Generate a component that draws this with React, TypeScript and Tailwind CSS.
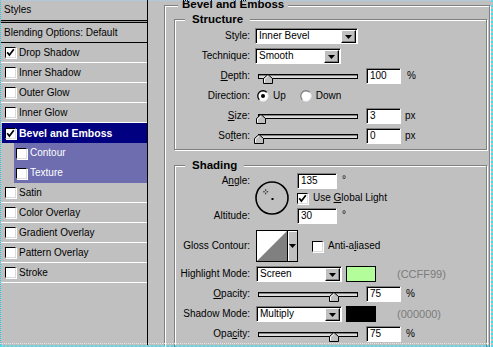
import React from "react";

const F = "font-['Liberation_Sans',Arial,sans-serif]";

function Check({ on }: { on?: boolean }) {
  return (
    <span className="w-[11px] h-[11px] shrink-0 bg-white border border-t-black border-l-black border-b-[#dcdcdc] border-r-[#dcdcdc] shadow-[1px_1px_0_#fff] flex items-center justify-center">
      {on && (
        <svg width="9" height="9" viewBox="0 0 9 9">
          <path d="M1.2 4.2 L3.4 7 L7.8 1.2" stroke="#000" strokeWidth="1.7" fill="none" />
        </svg>
      )}
    </span>
  );
}

function Arrow() {
  return (
    <svg width="7" height="4" viewBox="0 0 7 4">
      <path d="M0 0H7L3.5 4Z" fill="#000" />
    </svg>
  );
}

function Select({ value, wide }: { value: string; wide?: boolean }) {
  return (
    <div
      className={`${wide ? "w-[103px]" : "w-[86px]"} h-[16px] flex bg-white border border-t-[#808080] border-l-[#808080] border-b-white border-r-white shadow-[inset_1px_1px_0_#000]`}
    >
      <span className="flex-1 pl-[3px] leading-[14px]">{value}</span>
      <span className="w-[15px] h-[13px] mt-[1px] mr-[1px] bg-[#c0c0c0] border border-t-white border-l-white border-b-black border-r-black shadow-[inset_-1px_-1px_0_#808080] flex items-center justify-center">
        <Arrow />
      </span>
    </div>
  );
}

function Field({ v, wide }: { v: string; wide?: boolean }) {
  return (
    <div
      className={`${wide ? "w-[40px]" : "w-[35px]"} h-[16px] shrink-0 bg-white border border-t-[#808080] border-l-[#808080] border-b-white border-r-white shadow-[inset_1px_1px_0_#000] pl-[3px] leading-[14px]`}
    >
      {v}
    </div>
  );
}

function Slider({ pos }: { pos: number }) {
  return (
    <div className="relative w-[103px] h-[20px] pt-[8px] shrink-0">
      <div className="ml-[3px] h-[5px] border border-black bg-[#dadada] shadow-[inset_0_1px_0_#808080]" />
      <svg
        className="absolute top-[8px]"
        style={{ left: pos - 5 }}
        width="10"
        height="10"
        viewBox="0 0 10 10"
      >
        <path d="M0.5 9.5V4.5L5 0.5L9.5 4.5V9.5Z" fill="#c0c0c0" stroke="#000" />
        <path d="M1.5 8.5V5L5 1.9" stroke="#fff" fill="none" />
      </svg>
    </div>
  );
}

function Radio({ on }: { on?: boolean }) {
  return (
    <svg width="12" height="12" viewBox="0 0 12 12" className="shrink-0">
      <circle cx="6" cy="6" r="5.2" fill="#fff" stroke="#e8e8e8" />
      <path d="M2.3 9.7 A5.2 5.2 0 0 1 9.7 2.3" stroke={on ? "#000" : "#808080"} strokeWidth="1.3" fill="none" />
      {on && <circle cx="6" cy="6" r="2" fill="#000" />}
    </svg>
  );
}

function StyleRow({ label, on, kind }: { label: string; on?: boolean; kind?: "sel" | "sub" }) {
  if (kind === "sel")
    return (
      <div className="h-[20px] flex items-center bg-[#000080] ml-[2px] pl-[3px] text-white font-bold text-[10.5px]">
        <Check on={on} />
        <span className="ml-[3px]">{label}</span>
      </div>
    );
  if (kind === "sub")
    return (
      <div className="h-[20px] flex pl-[14px]">
        <div className="flex-1 flex items-center bg-[#6d6daf] pl-[2px] text-white">
          <Check />
          <span className="ml-[3px]">{label}</span>
        </div>
      </div>
    );
  return (
    <div className="h-[20px] flex items-center border-b border-white pl-[5px]">
      <Check on={on} />
      <span className="ml-[3px]">{label}</span>
    </div>
  );
}

const groove =
  "border border-[#808080] shadow-[inset_1px_1px_0_#fff,1px_1px_0_#fff]";

function Label({ children }: { children: React.ReactNode }) {
  return <span className="w-[75px] shrink-0 text-right">{children}</span>;
}

export default function App() {
  return (
    <div className={`relative w-[493px] h-[347px] overflow-hidden bg-[#c0c0c0] text-black text-[10px] leading-none ${F} flex`}>
      {/* styles list */}
      <div className="w-[148px] shrink-0 h-full border-r border-black">
        <div className="h-[20px] flex items-center pl-[4px]">Styles</div>
        <div className="h-[3px] border-y border-black bg-[#9a9a9a]" />
        <div className="h-[20px] flex items-center pl-[4px] border-b border-black">
          Blending Options: Default
        </div>
        <StyleRow label="Drop Shadow" on />
        <StyleRow label="Inner Shadow" />
        <StyleRow label="Outer Glow" />
        <StyleRow label="Inner Glow" />
        <StyleRow label="Bevel and Emboss" on kind="sel" />
        <StyleRow label="Contour" kind="sub" />
        <StyleRow label="Texture" kind="sub" />
        <StyleRow label="Satin" />
        <StyleRow label="Color Overlay" />
        <StyleRow label="Gradient Overlay" />
        <StyleRow label="Pattern Overlay" />
        <StyleRow label="Stroke" />
      </div>

      {/* options */}
      <div className="flex-1">
        <div className={`relative ml-[16px] mt-[5px] w-[326px] h-[360px] ${groove} pl-[9px] pt-[13px]`}>
          <span className="absolute -top-[8px] left-[13px] px-[4px] bg-[#c0c0c0] font-bold text-[11.5px] leading-[12px]">
            Bevel and Emboss
          </span>

          {/* Structure */}
          <div className={`relative w-[313px] h-[131px] ${groove} pt-[6px]`}>
            <span className="absolute -top-[7px] left-[10px] px-[7px] bg-[#c0c0c0] font-bold text-[11.5px] leading-[12px]">
              Structure
            </span>
            <div className="h-[20px] flex items-center">
              <Label>Style:</Label>
              <div className="ml-[5px]">
                <Select value="Inner Bevel" wide />
              </div>
            </div>
            <div className="h-[20px] flex items-center">
              <Label>Technique:</Label>
              <div className="ml-[5px]">
                <Select value="Smooth" />
              </div>
            </div>
            <div className="h-[20px] flex items-center">
              <Label>
                <u className="underline-offset-[1px]">D</u>epth:
              </Label>
              <div className="ml-[5px]">
                <Slider pos={13} />
              </div>
              <div className="ml-[8px]">
                <Field v="100" />
              </div>
              <span className="ml-[6px]">%</span>
            </div>
            <div className="h-[20px] flex items-center">
              <Label>Direction:</Label>
              <div className="ml-[7px] flex items-center">
                <Radio on />
                <span className="ml-[4px]">Up</span>
              </div>
              <div className="ml-[14px] flex items-center">
                <Radio />
                <span className="ml-[4px]">Down</span>
              </div>
            </div>
            <div className="h-[20px] flex items-center">
              <Label>
                <u className="underline-offset-[1px]">S</u>ize:
              </Label>
              <div className="ml-[5px]">
                <Slider pos={6} />
              </div>
              <div className="ml-[8px]">
                <Field v="3" />
              </div>
              <span className="ml-[4px]">px</span>
            </div>
            <div className="h-[20px] flex items-center">
              <Label>
                So<u className="underline-offset-[1px]">f</u>ten:
              </Label>
              <div className="ml-[5px]">
                <Slider pos={4} />
              </div>
              <div className="ml-[8px]">
                <Field v="0" />
              </div>
              <span className="ml-[4px]">px</span>
            </div>
          </div>

          {/* Shading */}
          <div className={`relative mt-[15px] w-[313px] h-[200px] ${groove} pt-[7px]`}>
            <span className="absolute -top-[7px] left-[10px] px-[7px] bg-[#c0c0c0] font-bold text-[11.5px] leading-[12px]">
              Shading
            </span>
            <div className="h-[51px] flex">
              <div className="w-[75px] shrink-0 flex flex-col justify-between text-right">
                <span className="leading-[16px]">
                  A<u className="underline-offset-[1px]">n</u>gle:
                </span>
                <span className="leading-[16px]">Altitude:</span>
              </div>
              <svg className="ml-[4px] mt-[7px] shrink-0" width="36" height="36" viewBox="0 0 36 36">
                <circle cx="18" cy="18" r="16" fill="none" stroke="#000" strokeWidth="1.6" />
                <path d="M11.7 9.3v1.6M11.7 12.7v1.6M9.2 11.8h1.6M12.6 11.8h1.6" stroke="#000" strokeWidth="0.9" />
                <rect x="17.5" y="18" width="2" height="2" fill="#000" />
              </svg>
              <div className="ml-[7px] flex flex-col">
                <div className="flex">
                  <Field v="135" wide />
                  <span className="ml-[5px] mt-[2px]">°</span>
                </div>
                <div className="mt-[3px] h-[12px] flex items-center">
                  <Check on />
                  <span className="ml-[5px]">
                    Use <u className="underline-offset-[1px]">G</u>lobal Light
                  </span>
                </div>
                <div className="mt-[4px] flex">
                  <Field v="30" wide />
                  <span className="ml-[5px] mt-[2px]">°</span>
                </div>
              </div>
            </div>

            <div className="mt-[6px] h-[32px] flex items-center">
              <Label>Gloss Contour:</Label>
              <div className="ml-[6px] w-[42px] h-[32px] flex border border-black shrink-0">
                <svg width="30" height="30" viewBox="0 0 30 30" className="block shrink-0">
                  <rect width="30" height="30" fill="#fff" />
                  <path d="M0 30L30 0V30Z" fill="#808080" />
                </svg>
                <div className="flex-1 bg-[#c0c0c0] border-l border-black flex items-center justify-center shadow-[inset_1px_1px_0_#fff]">
                  <Arrow />
                </div>
              </div>
              <div className="ml-[14px]">
                <Check />
              </div>
              <span className="ml-[5px]">
                Anti-a<u className="underline-offset-[1px]">l</u>iased
              </span>
            </div>

            <div className="mt-[2px] h-[20px] flex items-center">
              <Label>Highlight Mode:</Label>
              <div className="ml-[6px] w-[85px]">
                <Select value="Screen" />
              </div>
              <div className="ml-[5px] w-[30px] h-[16px] bg-[#b3fd9b] border border-black" />
              <span className="ml-[21px] text-[11px] text-[#7b7b7b]">(CCFF99)</span>
            </div>
            <div className="h-[20px] flex items-center">
              <Label>
                <u className="underline-offset-[1px]">O</u>pacity:
              </Label>
              <div className="ml-[5px]">
                <Slider pos={79} />
              </div>
              <div className="ml-[8px]">
                <Field v="75" />
              </div>
              <span className="ml-[5px]">%</span>
            </div>
            <div className="h-[20px] flex items-center">
              <Label>Shadow Mode:</Label>
              <div className="ml-[6px] w-[85px]">
                <Select value="Multiply" />
              </div>
              <div className="ml-[5px] w-[30px] h-[16px] bg-black border border-black" />
              <span className="ml-[21px] text-[11px] text-[#7b7b7b]">(000000)</span>
            </div>
            <div className="h-[20px] flex items-center">
              <Label>
                Opa<u className="underline-offset-[1px]">c</u>ity:
              </Label>
              <div className="ml-[5px]">
                <Slider pos={79} />
              </div>
              <div className="ml-[8px]">
                <Field v="75" />
              </div>
              <span className="ml-[5px]">%</span>
            </div>
          </div>
        </div>
      </div>

      {/* capture frame */}
      <div className="pointer-events-none absolute inset-0 border-l border-dotted border-l-[#28c8e8] border-t border-t-[#a8d0f0] border-r-2 border-r-[#40e0f0] border-b-2 border-b-[#40e0f0]" />
      <div className="pointer-events-none absolute left-0 right-[2px] bottom-[3px] border-t border-dotted border-[#e6e6e6]" />
    </div>
  );
}
